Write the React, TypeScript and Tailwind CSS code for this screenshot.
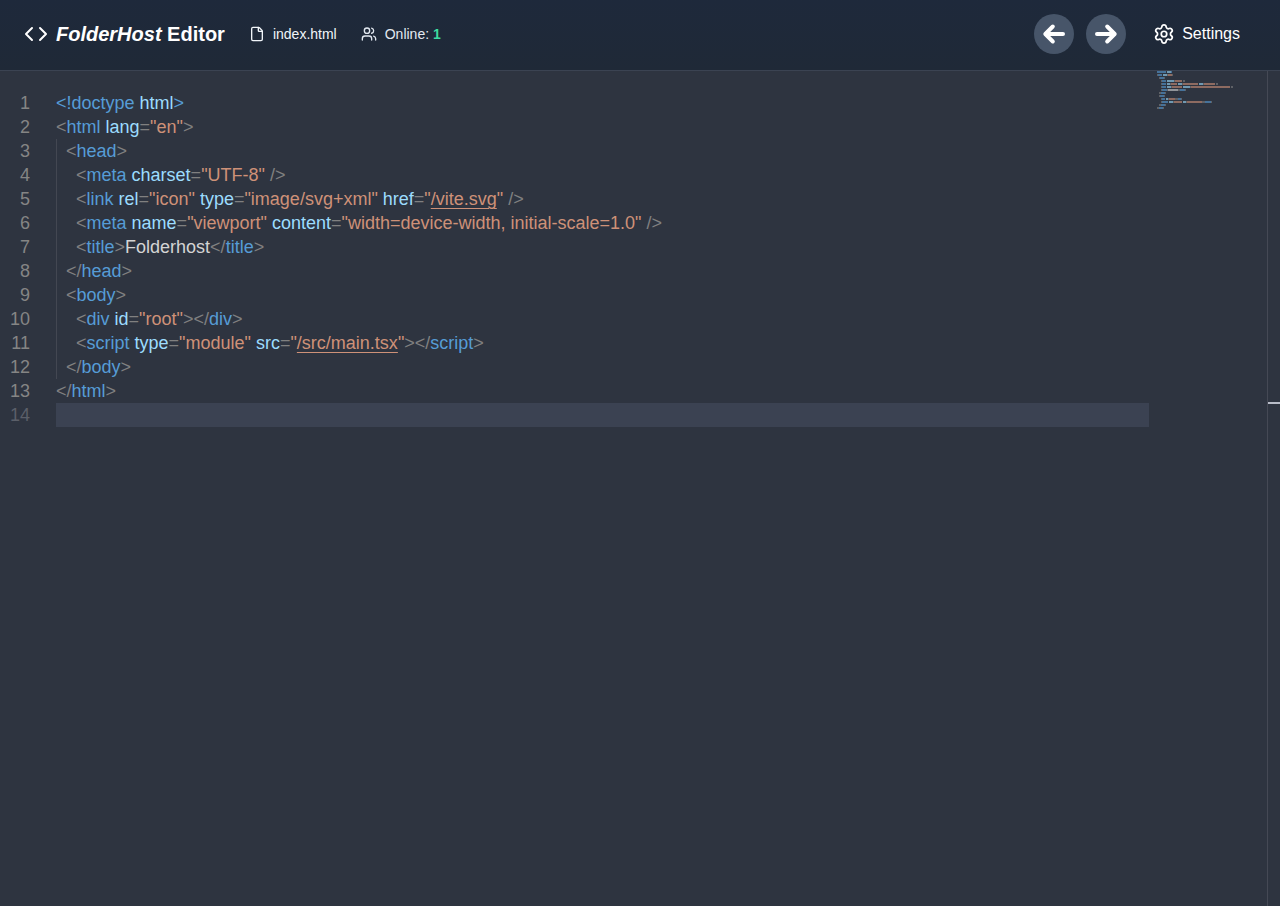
import { Code, File, Settings, Users } from "lucide-react";

type Kind = "p" | "t" | "a" | "s" | "x" | "u";
type Tok = [Kind, string];

const color: Record<Kind, string> = {
  p: "text-[#808080]",
  t: "text-[#569cd6]",
  a: "text-[#9cdcfe]",
  s: "text-[#ce9178]",
  x: "text-[#d4d4d4]",
  u: "text-[#ce9178] underline decoration-[#ce9178] underline-offset-[3px] decoration-1",
};

const mini: Record<Kind, string> = {
  p: "#808080",
  t: "#569cd6",
  a: "#9cdcfe",
  s: "#ce9178",
  x: "#d4d4d4",
  u: "#ce9178",
};

const lines: Tok[][] = [
  [["t", "<!doctype"], ["x", " "], ["a", "html"], ["t", ">"]],
  [["p", "<"], ["t", "html"], ["x", " "], ["a", "lang"], ["p", "="], ["s", '"en"'], ["p", ">"]],
  [["x", "  "], ["p", "<"], ["t", "head"], ["p", ">"]],
  [["x", "    "], ["p", "<"], ["t", "meta"], ["x", " "], ["a", "charset"], ["p", "="], ["s", '"UTF-8"'], ["x", " "], ["p", "/>"]],
  [["x", "    "], ["p", "<"], ["t", "link"], ["x", " "], ["a", "rel"], ["p", "="], ["s", '"icon"'], ["x", " "], ["a", "type"], ["p", "="], ["s", '"image/svg+xml"'], ["x", " "], ["a", "href"], ["p", "="], ["s", '"'], ["u", "/vite.svg"], ["s", '"'], ["x", " "], ["p", "/>"]],
  [["x", "    "], ["p", "<"], ["t", "meta"], ["x", " "], ["a", "name"], ["p", "="], ["s", '"viewport"'], ["x", " "], ["a", "content"], ["p", "="], ["s", '"width=device-width, initial-scale=1.0"'], ["x", " "], ["p", "/>"]],
  [["x", "    "], ["p", "<"], ["t", "title"], ["p", ">"], ["x", "Folderhost"], ["p", "</"], ["t", "title"], ["p", ">"]],
  [["x", "  "], ["p", "</"], ["t", "head"], ["p", ">"]],
  [["x", "  "], ["p", "<"], ["t", "body"], ["p", ">"]],
  [["x", "    "], ["p", "<"], ["t", "div"], ["x", " "], ["a", "id"], ["p", "="], ["s", '"root"'], ["p", "></"], ["t", "div"], ["p", ">"]],
  [["x", "    "], ["p", "<"], ["t", "script"], ["x", " "], ["a", "type"], ["p", "="], ["s", '"module"'], ["x", " "], ["a", "src"], ["p", "="], ["s", '"'], ["u", "/src/main.tsx"], ["s", '"'], ["p", "></"], ["t", "script"], ["p", ">"]],
  [["x", "  "], ["p", "</"], ["t", "body"], ["p", ">"]],
  [["p", "</"], ["t", "html"], ["p", ">"]],
  [],
];

function Minimap() {
  const rects: { x: number; y: number; w: number; c: string }[] = [];
  lines.forEach((toks, i) => {
    let x = 0;
    toks.forEach(([k, s]) => {
      if (s.trim()) rects.push({ x, y: i * 3, w: s.length, c: mini[k] });
      x += s.length;
    });
  });
  return (
    <svg width="110" height="45" className="block opacity-60">
      {rects.map((r, i) => (
        <rect key={i} x={r.x} y={r.y} width={r.w} height="2" fill={r.c} />
      ))}
    </svg>
  );
}

function HeavyArrow({ flip }: { flip?: boolean }) {
  return (
    <svg width="24" height="24" viewBox="0 0 24 24" fill="none" stroke="currentColor" strokeWidth="4" strokeLinecap="round" strokeLinejoin="round" className={flip ? "-scale-x-100" : ""}>
      <path d="M21 12H3.5M10.8 4.5 3.3 12l7.5 7.5" />
    </svg>
  );
}

export default function App() {
  return (
    <div className="flex h-[906px] w-[1280px] flex-col overflow-hidden bg-[#2e3440] font-['Liberation_Sans',Arial,sans-serif] text-white">
      <header className="flex h-[71px] shrink-0 items-center justify-between border-b border-[#3b4352] bg-gradient-to-b from-[#1e293b] to-[#1f2937] pb-[2px] pl-6 pr-6">
        <div className="flex items-center gap-6">
          <div className="flex items-center gap-2">
            <Code size={24} />
            <div className="text-xl font-bold">
              <span className="italic">FolderHost</span> Editor
            </div>
          </div>
          <div className="flex items-center gap-2 text-sm text-[#f1f5f9]">
            <File size={16} />
            <span>index.html</span>
          </div>
          <div className="flex items-center gap-2 text-sm text-[#e2e8f0]">
            <Users size={16} />
            <span>
              Online: <span className="font-bold text-[#3ddba0]">1</span>
            </span>
          </div>
        </div>
        <div className="flex items-center gap-3">
          <button className="flex h-10 w-10 items-center justify-center rounded-full bg-[#475569]">
            <HeavyArrow />
          </button>
          <button className="flex h-10 w-10 items-center justify-center rounded-full bg-[#475569]">
            <HeavyArrow flip />
          </button>
          <button className="flex items-center gap-[7px] rounded-lg py-2 pl-[15px] pr-4 text-base">
            <Settings size={22} strokeWidth={1.9} />
            <span>Settings</span>
          </button>
        </div>
      </header>
      <main className="flex min-h-0 flex-1">
        <div className="w-14 shrink-0 pt-5 text-[18px] leading-6">
          {lines.map((_, i) => (
            <div key={i} className={`w-[30px] text-right ${i === 13 ? "text-[#5b5f69]" : "text-[#858585]"}`}>
              {i + 1}
            </div>
          ))}
        </div>
        <div className="w-[1093px] shrink-0 pt-5 text-[18px] leading-6">
          {lines.map((toks, i) => (
            <div
              key={i}
              className={`h-6 whitespace-pre ${i === 13 ? "bg-[#3b4252]" : ""} ${i >= 2 && i <= 11 ? "shadow-[inset_1px_0_0_#434752]" : ""}`}
            >
              {toks.map(([k, s], j) => (
                <span key={j} className={color[k]}>
                  {s}
                </span>
              ))}
            </div>
          ))}
        </div>
        <div className="flex-1 pl-2">
          <Minimap />
        </div>
        <div className="flex w-[14px] shrink-0 flex-col border-l border-[#454955] pt-[331px]">
          <div className="h-[2px] bg-[#b8bcc8]" />
        </div>
      </main>
    </div>
  );
}
